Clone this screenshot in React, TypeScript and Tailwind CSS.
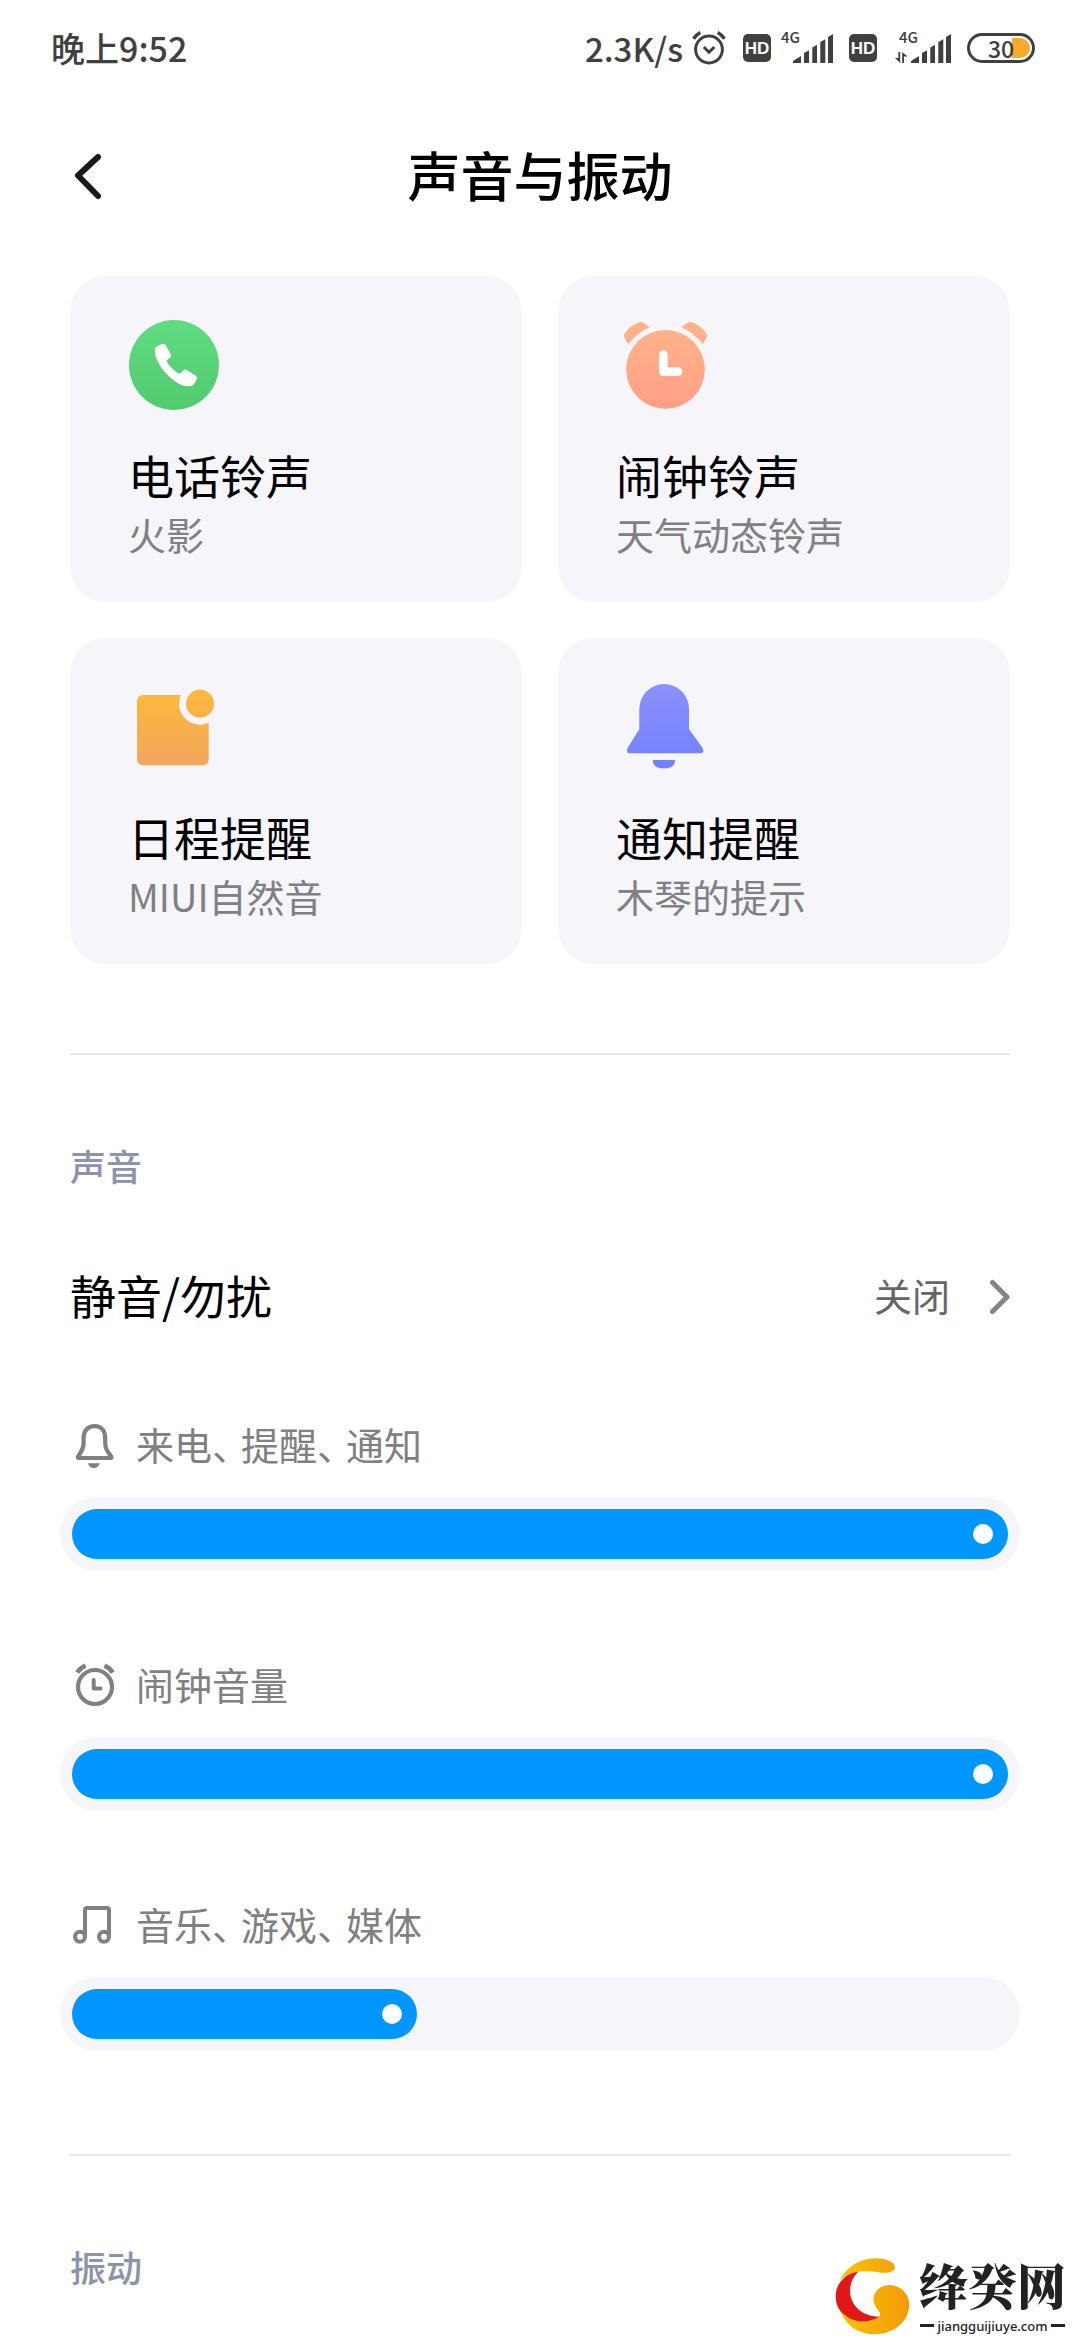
import { useId, useState } from "react";
import type { ReactNode } from "react";

function StatusAlarmIcon() {
  return (
    <svg viewBox="0 0 36 36" className="h-9 w-9" fill="none" stroke="#404040" strokeWidth="3" strokeLinecap="round" aria-hidden="true">
      <circle cx="18" cy="19.5" r="13.4" />
      <path d="M2.5 8.8 Q5.5 4.6 9.3 2.6 M33.5 8.8 Q30.5 4.6 26.7 2.6" strokeWidth="3.4" strokeLinecap="butt" />
      <path d="M12.8 17 L18 22.2 L23.4 17" strokeLinecap="butt" />
    </svg>
  );
}

function HdBadge() {
  return (
    <span className="flex h-7 w-7 items-center justify-center rounded-[5px] bg-[#404040] font-['Liberation_Sans',sans-serif] text-[17px] leading-none font-bold text-white">
      HD
    </span>
  );
}

function Signal({ data = false }: { data?: boolean }) {
  return (
    <span className={data ? "relative block h-[34px] w-14" : "relative block h-[34px] w-[52px]"}>
      <span className={data ? "absolute -top-1 left-1 text-[15px] leading-5 font-medium" : "absolute -top-1 left-0 text-[15px] leading-5 font-medium"}>
        4G
      </span>
      <svg viewBox="0 0 56 34" className="absolute right-0 bottom-0 h-[34px] w-14" fill="#404040" aria-hidden="true">
        <path d="M16 32 V30 L24 25 V32 Z M27 32 V22 L32 19.3 V32 Z M35.3 32 V16.5 L40 13.7 V32 Z M43.3 32 V11 L48.3 8.3 V32 Z M51 32 V6 L56 3 V32 Z" />
        {data && <path d="M3.4 21 H5.2 V32 L0 27 H3.4 Z M7.2 32 V21 L12.4 25.6 H9 V32 Z" />}
      </svg>
    </span>
  );
}

function Battery() {
  return (
    <span className="relative flex h-[30px] w-[68px] items-center justify-center rounded-full border-[3px] border-[#404040]">
      <svg viewBox="0 0 18 20" className="absolute right-[2px] h-5 w-[18px]" aria-hidden="true">
        <path d="M0 0 H8 A10 10 0 0 1 8 20 H0 Z" fill="#fba92c" />
      </svg>
      <span className="relative text-[23px] leading-none font-medium">30</span>
    </span>
  );
}

function StatusBar() {
  return (
    <div className="flex h-24 items-center justify-between pr-[45px] pl-[51px] leading-none font-medium text-[#404040]">
      <span className="text-[34px]">晚上9:52</span>
      <div className="flex items-center">
        <span className="text-[33px]">2.3K/s</span>
        <span className="ml-2 flex items-center gap-4">
          <StatusAlarmIcon />
          <span className="flex items-center gap-[10px]">
            <HdBadge />
            <Signal />
          </span>
          <span className="flex items-center gap-[18px]">
            <HdBadge />
            <Signal data />
          </span>
          <Battery />
        </span>
      </div>
    </div>
  );
}

function PhoneArt() {
  const id = useId();
  return (
    <svg viewBox="0 0 96 92" className="h-[92px] w-24" aria-hidden="true">
      <linearGradient id={id} x1="0" y1="0" x2="0" y2="1">
        <stop offset="0" stopColor="#61dc82" />
        <stop offset="1" stopColor="#52ca6e" />
      </linearGradient>
      <circle cx="46" cy="47" r="45" fill={`url(#${id})`} />
      <g transform="translate(-68 -48) scale(0.33333)">
        <path
          d="M285 236 Q286 229 306 222 Q314 220 317 226 L333 254 Q336 259 331 262 L322 269 Q319 272 321 276 Q332 294 353 309 Q358 312 362 309 L370 300 Q374 297 379 299 L407 317 Q413 321 411 327 L402 342 Q398 349 384 349 C360 349 330 325 312 303 C295 282 282 256 285 236 Z"
          fill="#fff"
        />
      </g>
    </svg>
  );
}

function AlarmArt() {
  const id = useId();
  return (
    <svg viewBox="0 0 96 92" className="h-[92px] w-24" aria-hidden="true">
      <linearGradient id={id} gradientUnits="userSpaceOnUse" x1="0" y1="156" x2="0" y2="416">
        <stop offset="0" stopColor="#ffb489" />
        <stop offset="1" stopColor="#ff9f86" />
      </linearGradient>
      <g transform="translate(-66 -48) scale(0.33333)" fill={`url(#${id})`}>
        <circle cx="346.500" cy="298" r="118" />
        <path d="M223 192 Q240 167 266 157 Q275 154 283 160 L299 172 Q260 190 235 222 L224 204 Q220 197 223 192 Z" />
        <path d="M470 192 Q453 167 427 157 Q418 154 410 160 L394 172 Q433 190 458 222 L469 204 Q473 197 470 192 Z" />
        <path d="M340 254 V305 H384" fill="none" stroke="#fff" strokeWidth="26" strokeLinecap="round" strokeLinejoin="round" />
      </g>
    </svg>
  );
}

function CalendarArt() {
  const id = useId();
  return (
    <svg viewBox="0 0 96 92" className="h-[92px] w-24" aria-hidden="true">
      <linearGradient id={`${id}g`} gradientUnits="userSpaceOnUse" x1="0" y1="12" x2="0" y2="86">
        <stop offset="0" stopColor="#fcb93c" />
        <stop offset="1" stopColor="#f3a65e" />
      </linearGradient>
      <mask id={`${id}m`}>
        <rect width="96" height="92" fill="#fff" />
        <circle cx="72" cy="23.700" r="21" fill="#000" />
      </mask>
      <g fill={`url(#${id}g)`}>
        <rect x="9" y="15" width="71.700" height="70.300" rx="6" mask={`url(#${id}m)`} />
        <circle cx="72" cy="23.700" r="14" />
      </g>
    </svg>
  );
}

function BellArt() {
  const id = useId();
  return (
    <svg viewBox="0 0 96 92" className="h-[92px] w-24" aria-hidden="true">
      <linearGradient id={id} gradientUnits="userSpaceOnUse" x1="0" y1="4" x2="0" y2="88">
        <stop offset="0" stopColor="#8b90ff" />
        <stop offset="1" stopColor="#7180fc" />
      </linearGradient>
      <g fill={`url(#${id})`}>
        <path d="M23.300 29 A24.850 25 0 0 1 73 29 V49 L86.600 68 Q89 73.300 84 73.300 H14 Q9.500 73.300 11.600 68 L23.300 49 Z" />
        <path d="M36.700 80 H59 Q59 88.500 48 88.500 Q36.700 88.500 36.700 80 Z" />
      </g>
    </svg>
  );
}

function BellIcon() {
  return (
    <svg viewBox="0 0 48 48" className="h-12 w-12" aria-hidden="true">
      <path
        d="M13.600 16 C13.600 8.500 18 4.200 24.700 4.200 C31.400 4.200 35.200 8.500 35.200 16 V21 C35.200 26.500 37.500 29.500 41.200 34.500 Q42 36 40.500 36 H8.800 Q7.300 36 8.100 34.500 C11.500 29.500 13.600 26.500 13.600 21 Z"
        fill="none"
        stroke="#808080"
        strokeWidth="4.200"
        strokeLinejoin="round"
      />
      <path d="M18 41.300 H29.700 Q28.500 46 23.800 46 Q19.200 46 18 41.300 Z" fill="#808080" />
    </svg>
  );
}

function AlarmIcon() {
  return (
    <svg viewBox="0 0 48 48" className="h-12 w-12" fill="none" stroke="#808080" aria-hidden="true">
      <circle cx="25" cy="25" r="17" strokeWidth="4.200" />
      <path d="M23.700 18 V26.400 H30.500" strokeWidth="4" strokeLinecap="round" strokeLinejoin="round" />
      <path d="M7.300 10.600 Q10 6 15.500 3.700 M42.700 10.600 Q40 6 34.500 3.700" strokeWidth="4.600" />
    </svg>
  );
}

function MusicIcon() {
  return (
    <svg viewBox="0 0 48 48" className="h-12 w-12" fill="none" stroke="#808080" strokeWidth="4" strokeLinejoin="round" aria-hidden="true">
      <circle cx="10" cy="34.700" r="5" />
      <circle cx="34" cy="34.700" r="5" />
      <path d="M15 34.700 V8 Q15 6 17 6 H37 Q39 6 39 8 V34.700" />
    </svg>
  );
}

function ToneCard({ art, title, value }: { art: ReactNode; title: string; value: string }) {
  return (
    <button type="button" className="flex flex-col items-start rounded-[36px] bg-[#f5f5fa] px-[58px] pt-[42px] pb-11 text-left">
      {art}
      <span className="mt-[34px] text-[46px] leading-[60px] text-black">{title}</span>
      <span className="mt-[6px] text-[38px] leading-[48px] text-[#808084]">{value}</span>
    </button>
  );
}

function VolumeRow({ icon, terms, initial }: { icon: ReactNode; terms: string[]; initial: number }) {
  const id = useId();
  const [level, setLevel] = useState(initial);
  return (
    <div>
      <label htmlFor={id} className="flex items-center text-[38px] text-[#808080]">
        {icon}
        {/* half-width enumeration commas, spaced by the gap */}
        <span className="ml-[18px] flex gap-[10px] pb-1 leading-[44px] [font-feature-settings:'halt']">
          {terms.map((term, i) => (
            <span key={term}>{i < terms.length - 1 ? `${term}、` : term}</span>
          ))}
        </span>
      </label>
      <div className="relative -mx-[10px] mt-[27px] rounded-full bg-[#f5f5fa] p-3">
        <div
          className="flex h-[50px] items-center justify-end rounded-full bg-[#0096ff] pr-[15px]"
          style={{ width: `calc(50px + (100% - 50px) * ${level / 15})` }}
        >
          <span className="h-5 w-5 rounded-full bg-white" />
        </div>
        <input
          id={id}
          type="range"
          min={0}
          max={15}
          value={level}
          onChange={(e) => setLevel(Number(e.target.value))}
          className="absolute inset-0 h-full w-full cursor-pointer opacity-0"
        />
      </div>
    </div>
  );
}

function SiteMark() {
  const id = useId();
  return (
    <div className="absolute right-[14px] bottom-1 flex items-center gap-2">
      <svg viewBox="40 74 230 236" className="h-[79px] w-[77px]" aria-hidden="true">
        <linearGradient id={id} gradientUnits="userSpaceOnUse" x1="60" y1="0" x2="265" y2="0">
          <stop offset="0" stopColor="#fbc200" />
          <stop offset="1" stopColor="#f39a0a" />
        </linearGradient>
        <path
          d="M55 145 C82 98 122 78 165 78 C200 79 222 90 222 105 C222 118 200 124 175 120 C150 116 130 116 112 118 C88 121 68 132 55 145 Z"
          fill={`url(#${id})`}
        />
        <path
          d="M56 228 C90 275 140 275 175 252 C186 240 160 228 158 203 C158 175 180 158 205 158 C240 158 265 185 265 218 C262 270 215 305 160 305 C108 304 72 275 56 228 Z"
          fill={`url(#${id})`}
        />
        <path
          d="M112 118 C80 120 45 150 45 190 C45 213 52 228 62 238 C95 272 140 275 175 252 C122 252 86 215 88 172 C90 148 98 132 112 118 Z"
          fill="#e01818"
        />
      </svg>
      <div className="flex flex-col items-center text-[#222222]">
        <span className="font-['Noto_Serif_CJK_SC','Noto_Sans_CJK_SC',serif] text-[49px] leading-[52px] font-black">绛癸网</span>
        <span className="mt-[6px] flex items-center gap-[3px] font-['Noto_Sans',sans-serif] text-[13px] leading-5 font-medium">
          <span className="h-[3px] w-[14px] bg-[#222222]" />
          jiangguijiuye.com
          <span className="h-[3px] w-[14px] bg-[#222222]" />
        </span>
      </div>
    </div>
  );
}

export default function App() {
  return (
    <div lang="zh-CN" className="relative min-h-screen overflow-hidden bg-white font-['Noto_Sans_CJK_SC',sans-serif]">
      <StatusBar />
      <header className="grid h-[162px] grid-cols-[1fr_auto_1fr] items-center px-[70px]">
        <button type="button" aria-label="返回" className="justify-self-start">
          <svg viewBox="0 0 36 48" className="h-12 w-9" fill="none" stroke="#1a1a1a" strokeWidth="6" strokeLinecap="round" strokeLinejoin="round" aria-hidden="true">
            <path d="M28 4 L8 22.500 L28 43" />
          </svg>
        </button>
        <h1 className="pb-[6px] text-[53px] leading-[72px] font-medium text-black">声音与振动</h1>
      </header>
      <main className="px-[70px] pt-[18px]">
        <div className="grid grid-cols-2 gap-9">
          <ToneCard art={<PhoneArt />} title="电话铃声" value="火影" />
          <ToneCard art={<AlarmArt />} title="闹钟铃声" value="天气动态铃声" />
          <ToneCard art={<CalendarArt />} title="日程提醒" value="MIUI自然音" />
          <ToneCard art={<BellArt />} title="通知提醒" value="木琴的提示" />
        </div>

        <section className="mt-[89px] border-t-2 border-[#e6e6e6] pt-[88px]">
          <h2 className="pb-1 text-[36px] leading-[44px] font-medium text-[#8d93ad]">声音</h2>
          <button type="button" className="mt-[76px] flex w-full items-center justify-between text-left">
            <span className="pb-[6px] text-[46px] leading-[54px] text-black">静音/勿扰</span>
            <span className="flex items-center gap-9 text-[38px] text-[#666666]">
              <span className="pb-1 leading-[44px]">关闭</span>
              <svg viewBox="0 0 24 36" className="h-9 w-6" fill="none" stroke="#848484" strokeWidth="5" strokeLinecap="round" strokeLinejoin="round" aria-hidden="true">
                <path d="M6.500 3.500 L21 18 L6.500 32.500" />
              </svg>
            </span>
          </button>
          <div className="mt-[95px] flex flex-col gap-[91px]">
            <VolumeRow icon={<BellIcon />} terms={["来电", "提醒", "通知"]} initial={15} />
            <VolumeRow icon={<AlarmIcon />} terms={["闹钟音量"]} initial={15} />
            <VolumeRow icon={<MusicIcon />} terms={["音乐", "游戏", "媒体"]} initial={5} />
          </div>
        </section>

        <section className="mt-[103px] border-t-2 border-[#e6e6e6] pt-[88px]">
          <h2 className="pb-1 text-[36px] leading-[44px] font-medium text-[#8d93ad]">振动</h2>
        </section>
      </main>
      <SiteMark />
    </div>
  );
}
